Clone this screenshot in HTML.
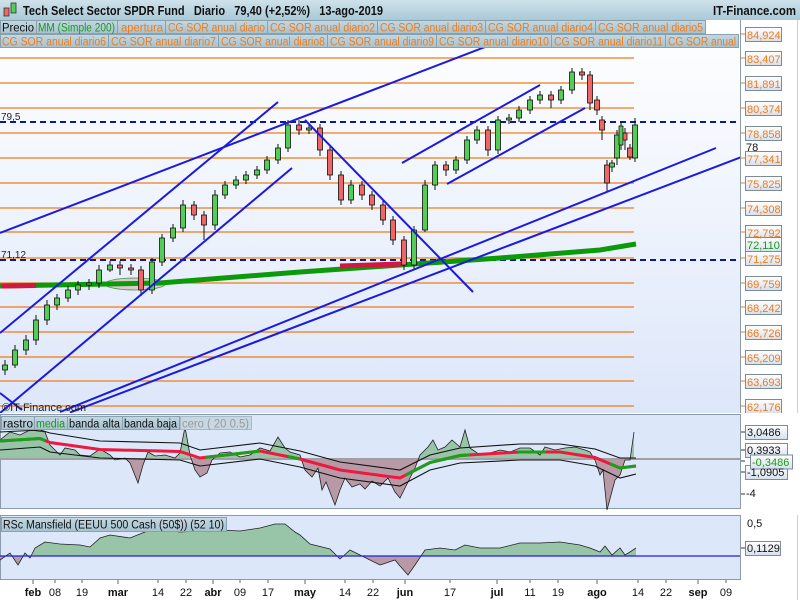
<!DOCTYPE html>
<html><head><meta charset="utf-8"><style>
html,body{margin:0;padding:0;background:#fff}
svg{display:block;font-family:"Liberation Sans",sans-serif}
</style></head><body>
<svg width="800" height="600" viewBox="0 0 800 600" xmlns="http://www.w3.org/2000/svg">
<defs>
<linearGradient id="hdr" x1="0" y1="0" x2="0" y2="1"><stop offset="0" stop-color="#cfe2ea"/><stop offset="1" stop-color="#a9c9d8"/></linearGradient>
<linearGradient id="bg" x1="0" y1="0" x2="0" y2="1"><stop offset="0" stop-color="#ffffff"/><stop offset="1" stop-color="#dde7fa"/></linearGradient>
<linearGradient id="tab" x1="0" y1="0" x2="0" y2="1"><stop offset="0" stop-color="#c3d8e2"/><stop offset="1" stop-color="#a6c2d0"/></linearGradient>
<linearGradient id="lb" x1="0" y1="0" x2="0" y2="1"><stop offset="0" stop-color="#ffffff"/><stop offset="1" stop-color="#d6e0ee"/></linearGradient>
<clipPath id="cm"><rect x="0" y="48" width="740" height="365"/></clipPath>
<clipPath id="up1"><rect x="0" y="414" width="740" height="45"/></clipPath>
<clipPath id="dn1"><rect x="0" y="459" width="740" height="50"/></clipPath>
<clipPath id="up2"><rect x="0" y="515" width="740" height="41"/></clipPath>
<clipPath id="dn2"><rect x="0" y="556" width="740" height="24"/></clipPath>
<clipPath id="gseg"><rect x="0" y="414" width="45" height="95"/><rect x="205" y="414" width="55" height="95"/><rect x="288" y="414" width="12" height="95"/><rect x="405" y="414" width="65" height="95"/><rect x="518" y="414" width="28" height="95"/><rect x="610" y="414" width="30" height="95"/></clipPath>
</defs>
<rect x="0" y="0" width="800" height="20" fill="url(#hdr)"/>
<rect x="4" y="8" width="5" height="8" fill="#e66" stroke="#333" stroke-width="0.8"/>
<rect x="11" y="3" width="5" height="10" fill="#5c5" stroke="#333" stroke-width="0.8"/>
<text x="23" y="15" font-size="13" font-weight="bold" fill="#111" textLength="360" lengthAdjust="spacingAndGlyphs">Tech Select Sector SPDR Fund&#160;&#160; Diario&#160;&#160; 79,40 (+2,52%)&#160;&#160; 13-ago-2019</text>
<text x="713" y="15" font-size="13" font-weight="bold" fill="#111" textLength="83" lengthAdjust="spacingAndGlyphs">IT-Finance.com</text>
<rect x="0" y="20" width="740" height="393" fill="url(#bg)"/>
<rect x="740" y="20" width="60" height="393" fill="#fff"/>
<line x1="740.5" y1="20" x2="740.5" y2="413" stroke="#8a9aa8"/>
<line x1="797.5" y1="20" x2="797.5" y2="600" stroke="#c8d0d8"/>
<g font-size="11.5">
<rect x="0.5" y="20.5" width="705" height="13" fill="url(#tab)" stroke="#8aa0ac"/>
<rect x="0.5" y="34.5" width="738" height="13" fill="url(#tab)" stroke="#8aa0ac"/>
<g stroke="#8aa0ac"><line x1="36.5" y1="20" x2="36.5" y2="34"/><line x1="117.5" y1="20" x2="117.5" y2="34"/><line x1="165.5" y1="20" x2="165.5" y2="34"/><line x1="267.5" y1="20" x2="267.5" y2="34"/><line x1="377.5" y1="20" x2="377.5" y2="34"/><line x1="485.5" y1="20" x2="485.5" y2="34"/><line x1="595.5" y1="20" x2="595.5" y2="34"/>
<line x1="108.5" y1="34" x2="108.5" y2="48"/><line x1="218.5" y1="34" x2="218.5" y2="48"/><line x1="327.5" y1="34" x2="327.5" y2="48"/><line x1="436.5" y1="34" x2="436.5" y2="48"/><line x1="551.5" y1="34" x2="551.5" y2="48"/><line x1="665.5" y1="34" x2="665.5" y2="48"/></g>
<text x="2" y="31.5" fill="#111" textLength="32" lengthAdjust="spacingAndGlyphs">Precio</text>
<text x="38" y="31.5" fill="#1a9a1a" textLength="77" lengthAdjust="spacingAndGlyphs">MM (Simple 200)</text>
<g fill="#f07c18">
<text x="121" y="31.5" textLength="42" lengthAdjust="spacingAndGlyphs">apertura</text>
<text x="168" y="31.5" textLength="97" lengthAdjust="spacingAndGlyphs">CG SOR anual diario</text>
<text x="270" y="31.5" textLength="105" lengthAdjust="spacingAndGlyphs">CG SOR anual diario2</text>
<text x="380" y="31.5" textLength="103" lengthAdjust="spacingAndGlyphs">CG SOR anual diario3</text>
<text x="488" y="31.5" textLength="105" lengthAdjust="spacingAndGlyphs">CG SOR anual diario4</text>
<text x="598" y="31.5" textLength="105" lengthAdjust="spacingAndGlyphs">CG SOR anual diario5</text>
<text x="2" y="45.5" textLength="104" lengthAdjust="spacingAndGlyphs">CG SOR anual diario6</text>
<text x="111" y="45.5" textLength="105" lengthAdjust="spacingAndGlyphs">CG SOR anual diario7</text>
<text x="221" y="45.5" textLength="104" lengthAdjust="spacingAndGlyphs">CG SOR anual diario8</text>
<text x="330" y="45.5" textLength="104" lengthAdjust="spacingAndGlyphs">CG SOR anual diario9</text>
<text x="439" y="45.5" textLength="110" lengthAdjust="spacingAndGlyphs">CG SOR anual diario10</text>
<text x="554" y="45.5" textLength="109" lengthAdjust="spacingAndGlyphs">CG SOR anual diario11</text>
<text x="668" y="45.5" textLength="68" lengthAdjust="spacingAndGlyphs">CG SOR anual</text>
</g></g>
<g clip-path="url(#cm)">
<g stroke="#f07c18" stroke-width="1.2">
<line x1="0" y1="58" x2="634" y2="58"/><line x1="0" y1="83" x2="634" y2="83"/><line x1="0" y1="108" x2="634" y2="108"/><line x1="0" y1="133" x2="634" y2="133"/><line x1="0" y1="158" x2="634" y2="158"/><line x1="0" y1="183" x2="634" y2="183"/><line x1="0" y1="208" x2="634" y2="208"/><line x1="0" y1="232" x2="634" y2="232"/><line x1="0" y1="258" x2="634" y2="258"/><line x1="0" y1="283" x2="634" y2="283"/><line x1="0" y1="307" x2="634" y2="307"/><line x1="0" y1="332" x2="634" y2="332"/><line x1="0" y1="357" x2="634" y2="357"/><line x1="0" y1="381" x2="634" y2="381"/><line x1="0" y1="406" x2="634" y2="406"/>
</g>
<g stroke="#0a1a9a" stroke-width="2" stroke-dasharray="6,4"><line x1="0" y1="122" x2="740" y2="122"/><line x1="0" y1="260" x2="740" y2="260"/></g>
<text x="1" y="120" font-size="10" fill="#222">79,5</text>
<text x="1" y="258" font-size="10" fill="#222">71,12</text>
<ellipse cx="135" cy="284" rx="30" ry="6" fill="#e0c8d0" stroke="#3a9a3a" stroke-width="0.8"/>
<path d="M0 286 L160 283 L300 272 L400 265 L500 258 L600 250 L636 244" fill="none" stroke="#0a9a0a" stroke-width="5"/>
<path d="M2 286 L36 285.5" stroke="#d01840" stroke-width="5"/>
<path d="M340 266 L402 264" stroke="#d01840" stroke-width="5"/>
<path stroke="#111" stroke-width="1" d="M5 360V375M15 345V368M26 335V355M36 315V345M47 300V325M57 294V310M68 286V302M78 281V295M89 279V290M99 265V288M110 261V272M120 261V275M131 264V275M141 266V296M152 258V294M162 234V266M173 224V242M183 200V232M194 201V220M204 211V240M215 190V230M225 181V199M236 176V189M246 171V184M257 166V179M267 156V174M278 144V164M288 120V152M299 120V135M309 124V134M320 124V156M330 146V180M341 171V205M351 180V204M362 181V200M372 191V210M383 201V225M393 216V245M404 236V270M414 226V270M425 180V232M435 161V190M446 161V176M456 156V174M467 136V164M477 126V144M488 126V156M498 116V154M509 114V124M519 106V122M530 96V114M540 91V104M551 91V108M561 86V104M572 68V94M582 68V80M590 71V110M597 96V115M602 116V140M607 160V192M612 160V172M617 130V165M621 122V150M625 128V150M630 144V160M635 118V162"/>
<g stroke="#111" stroke-width="0.8">
<g fill="#5c5">
<rect x="2.5" y="365" width="5" height="5"/><rect x="12.5" y="350" width="5" height="15"/><rect x="23.5" y="340" width="5" height="10"/><rect x="33.5" y="320" width="5" height="20"/><rect x="44.5" y="305" width="5" height="15"/><rect x="54.5" y="298" width="5" height="7"/><rect x="65.5" y="290" width="5" height="8"/><rect x="75.5" y="285" width="5" height="5"/><rect x="86.5" y="283" width="5" height="2"/><rect x="96.5" y="270" width="5" height="13"/><rect x="107.5" y="265" width="5" height="5"/>
<rect x="149.5" y="262" width="5" height="28"/><rect x="159.5" y="238" width="5" height="24"/><rect x="170.5" y="228" width="5" height="10"/><rect x="180.5" y="205" width="5" height="23"/>
<rect x="212.5" y="195" width="5" height="30"/><rect x="222.5" y="185" width="5" height="10"/><rect x="233.5" y="180" width="5" height="5"/><rect x="243.5" y="175" width="5" height="5"/><rect x="254.5" y="170" width="5" height="5"/><rect x="264.5" y="160" width="5" height="10"/><rect x="275.5" y="148" width="5" height="12"/><rect x="285.5" y="125" width="5" height="23"/><rect x="306.5" y="128" width="5" height="2"/>
<rect x="348.5" y="185" width="5" height="15"/>
<rect x="411.5" y="230" width="5" height="35"/><rect x="422.5" y="185" width="5" height="45"/><rect x="432.5" y="165" width="5" height="20"/><rect x="453.5" y="160" width="5" height="10"/><rect x="464.5" y="140" width="5" height="20"/><rect x="474.5" y="130" width="5" height="10"/><rect x="495.5" y="120" width="5" height="30"/><rect x="506.5" y="118" width="5" height="2"/><rect x="516.5" y="110" width="5" height="8"/><rect x="527.5" y="100" width="5" height="10"/><rect x="537.5" y="95" width="5" height="5"/><rect x="558.5" y="90" width="5" height="10"/><rect x="569.5" y="72" width="5" height="18"/>
<rect x="609.5" y="163" width="5" height="4"/><rect x="614.5" y="135" width="5" height="23"/><rect x="619" y="126" width="4" height="19"/><rect x="632.5" y="125" width="5" height="33"/>
</g>
<g fill="#e66">
<rect x="117.5" y="265" width="5" height="3"/><rect x="128.5" y="268" width="5" height="2"/><rect x="138.5" y="270" width="5" height="20"/>
<rect x="191.5" y="205" width="5" height="10"/><rect x="201.5" y="215" width="5" height="10"/><rect x="296.5" y="125" width="5" height="5"/>
<rect x="317.5" y="128" width="5" height="22"/><rect x="327.5" y="150" width="5" height="25"/><rect x="338.5" y="175" width="5" height="25"/><rect x="359.5" y="185" width="5" height="10"/><rect x="369.5" y="195" width="5" height="10"/><rect x="380.5" y="205" width="5" height="15"/><rect x="390.5" y="220" width="5" height="20"/><rect x="401.5" y="240" width="5" height="25"/>
<rect x="443.5" y="165" width="5" height="5"/><rect x="485.5" y="130" width="5" height="20"/><rect x="548.5" y="95" width="5" height="5"/><rect x="579.5" y="72" width="5" height="3"/>
<rect x="587.5" y="75" width="5" height="28"/><rect x="594.5" y="100" width="5" height="10"/><rect x="599.5" y="120" width="5" height="10"/><rect x="604.5" y="165" width="5" height="18"/><rect x="623" y="133" width="4" height="7"/><rect x="627.5" y="148" width="5" height="9"/>
</g></g>
<g stroke="#1a1ae0" stroke-width="2" fill="none">
<line x1="0" y1="333" x2="278" y2="102"/>
<line x1="0" y1="413" x2="292" y2="168"/>
<line x1="0" y1="233" x2="485" y2="47"/>
<line x1="305" y1="120" x2="473" y2="292"/>
<line x1="402" y1="163" x2="540" y2="85"/>
<line x1="447" y1="184" x2="585" y2="108"/>
<line x1="60" y1="412" x2="716" y2="148"/>
<line x1="70" y1="412.5" x2="760" y2="150"/>
<line x1="0" y1="393" x2="22" y2="410"/>
</g>
</g>
<text x="2" y="411" font-size="11" fill="#222" textLength="84" lengthAdjust="spacingAndGlyphs">©IT-Finance.com</text>
<g font-size="11">
<g fill="#111"><text x="746" y="61">84</text><text x="746" y="151">78</text><text x="746" y="255">72</text></g>
<g stroke="#f07c18"><line x1="741" y1="34" x2="746" y2="34"/><line x1="741" y1="58" x2="746" y2="58"/><line x1="741" y1="83" x2="746" y2="83"/><line x1="741" y1="108" x2="746" y2="108"/><line x1="741" y1="133" x2="746" y2="133"/><line x1="741" y1="158" x2="746" y2="158"/><line x1="741" y1="183" x2="746" y2="183"/><line x1="741" y1="208" x2="746" y2="208"/><line x1="741" y1="232" x2="746" y2="232"/><line x1="741" y1="258" x2="746" y2="258"/><line x1="741" y1="283" x2="746" y2="283"/><line x1="741" y1="307" x2="746" y2="307"/><line x1="741" y1="332" x2="746" y2="332"/><line x1="741" y1="357" x2="746" y2="357"/><line x1="741" y1="381" x2="746" y2="381"/><line x1="741" y1="406" x2="746" y2="406"/></g>
<g fill="url(#lb)" stroke="#7a8c98">
<rect x="745.5" y="27.5" width="36" height="14"/><rect x="745.5" y="51.5" width="36" height="14"/><rect x="745.5" y="76.5" width="36" height="14"/><rect x="745.5" y="101.5" width="36" height="14"/><rect x="745.5" y="126.5" width="36" height="14"/><rect x="745.5" y="151.5" width="36" height="14"/><rect x="745.5" y="176.5" width="36" height="14"/><rect x="745.5" y="201.5" width="36" height="14"/><rect x="745.5" y="225.5" width="36" height="14"/><rect x="745.5" y="237.5" width="36" height="14"/><rect x="745.5" y="251.5" width="36" height="14"/><rect x="745.5" y="276.5" width="36" height="14"/><rect x="745.5" y="300.5" width="36" height="14"/><rect x="745.5" y="325.5" width="36" height="14"/><rect x="745.5" y="350.5" width="36" height="14"/><rect x="745.5" y="374.5" width="36" height="14"/><rect x="745.5" y="399.5" width="36" height="14"/>
</g>
<g fill="#f07c18">
<text x="747" y="39">84,924</text><text x="747" y="63">83,407</text><text x="747" y="88">81,891</text><text x="747" y="113">80,374</text><text x="747" y="138">78,858</text><text x="747" y="163">77,341</text><text x="747" y="188">75,825</text><text x="747" y="213">74,308</text><text x="747" y="237">72,792</text><text x="747" y="263">71,275</text><text x="747" y="288">69,759</text><text x="747" y="312">68,242</text><text x="747" y="337">66,726</text><text x="747" y="362">65,209</text><text x="747" y="386">63,693</text><text x="747" y="411">62,176</text>
</g>
<text x="747" y="249" fill="#1a9a1a">72,110</text>
</g>
<rect x="0" y="413" width="800" height="102" fill="#fff"/>
<rect x="0.5" y="414.5" width="740" height="94" fill="#dde7fa" stroke="#8a9aa8"/>
<g clip-path="url(#up1)"><path d="M0 459 L0 440 L10 432 L20 435 L30 430 L45 432 L50 445 L60 455 L65 448 L75 450 L80 455 L90 456 L100 449 L110 455 L115 460 L125 458 L130 463 L138 483 L143 465 L148 452 L155 456 L165 455 L175 458 L180 453 L185 427 L190 455 L195 470 L200 477 L207 473 L212 460 L220 453 L230 452 L240 457 L250 455 L260 448 L270 451 L278 437 L285 448 L290 452 L300 455 L305 470 L312 477 L318 468 L322 490 L326 482 L335 505 L340 490 L345 478 L352 487 L360 484 L365 489 L372 481 L380 486 L388 478 L395 492 L400 498 L408 482 L415 468 L420 455 L428 447 L433 440 L438 450 L445 447 L452 440 L460 447 L465 430 L470 448 L480 455 L490 453 L500 450 L510 452 L520 448 L530 448 L540 455 L545 447 L555 450 L565 448 L575 447 L585 450 L590 452 L595 460 L600 475 L603 470 L607 510 L615 480 L620 475 L625 460 L630 460 L634 432 L634 459 Z" fill="#98c4a8"/></g>
<g clip-path="url(#dn1)"><path d="M0 459 L0 440 L10 432 L20 435 L30 430 L45 432 L50 445 L60 455 L65 448 L75 450 L80 455 L90 456 L100 449 L110 455 L115 460 L125 458 L130 463 L138 483 L143 465 L148 452 L155 456 L165 455 L175 458 L180 453 L185 427 L190 455 L195 470 L200 477 L207 473 L212 460 L220 453 L230 452 L240 457 L250 455 L260 448 L270 451 L278 437 L285 448 L290 452 L300 455 L305 470 L312 477 L318 468 L322 490 L326 482 L335 505 L340 490 L345 478 L352 487 L360 484 L365 489 L372 481 L380 486 L388 478 L395 492 L400 498 L408 482 L415 468 L420 455 L428 447 L433 440 L438 450 L445 447 L452 440 L460 447 L465 430 L470 448 L480 455 L490 453 L500 450 L510 452 L520 448 L530 448 L540 455 L545 447 L555 450 L565 448 L575 447 L585 450 L590 452 L595 460 L600 475 L603 470 L607 510 L615 480 L620 475 L625 460 L630 460 L634 432 L634 459 Z" fill="#b89aa6"/></g>
<line x1="0" y1="459" x2="740" y2="459" stroke="#a0a0a0" stroke-width="2"/>
<path d="M0 440 L10 432 L20 435 L30 430 L45 432 L50 445 L60 455 L65 448 L75 450 L80 455 L90 456 L100 449 L110 455 L115 460 L125 458 L130 463 L138 483 L143 465 L148 452 L155 456 L165 455 L175 458 L180 453 L185 427 L190 455 L195 470 L200 477 L207 473 L212 460 L220 453 L230 452 L240 457 L250 455 L260 448 L270 451 L278 437 L285 448 L290 452 L300 455 L305 470 L312 477 L318 468 L322 490 L326 482 L335 505 L340 490 L345 478 L352 487 L360 484 L365 489 L372 481 L380 486 L388 478 L395 492 L400 498 L408 482 L415 468 L420 455 L428 447 L433 440 L438 450 L445 447 L452 440 L460 447 L465 430 L470 448 L480 455 L490 453 L500 450 L510 452 L520 448 L530 448 L540 455 L545 447 L555 450 L565 448 L575 447 L585 450 L590 452 L595 460 L600 475 L603 470 L607 510 L615 480 L620 475 L625 460 L630 460 L634 432" fill="none" stroke="#222" stroke-width="0.8"/>
<g fill="none" stroke-width="1.1" stroke="#111">
<path d="M0 432 L40 430 L50 433 L100 441 L180 443 L200 450 L260 443 L300 451 L340 462 L400 470 L430 455 L460 448 L520 444 L560 444 L595 449 L620 458 L636 458"/>
<path d="M0 450 L40 447 L50 452 L100 458 L180 460 L200 466 L260 459 L300 467 L340 478 L400 486 L430 470 L460 463 L520 460 L560 460 L595 466 L620 478 L636 474"/>
</g>
<path d="M0 441 L40 438.5 L50 442.5 L100 449.5 L180 451.5 L200 458 L260 451 L300 459 L340 470 L400 478 L430 462.5 L460 455.5 L520 452 L560 452 L595 457.5 L620 468 L636 466" fill="none" stroke="#ee1840" stroke-width="3"/>
<path d="M0 441 L40 438.5 L50 442.5 L100 449.5 L180 451.5 L200 458 L260 451 L300 459 L340 470 L400 478 L430 462.5 L460 455.5 L520 452 L560 452 L595 457.5 L620 468 L636 466" fill="none" stroke="#1aa01a" stroke-width="3" clip-path="url(#gseg)"/>
<g font-size="11.5">
<rect x="1.5" y="416.5" width="178" height="13" fill="url(#tab)" stroke="#8aa0ac"/>
<g stroke="#8aa0ac"><line x1="34.5" y1="416" x2="34.5" y2="430"/><line x1="67.5" y1="416" x2="67.5" y2="430"/><line x1="122.5" y1="416" x2="122.5" y2="430"/><line x1="179.5" y1="416" x2="179.5" y2="430"/></g>
<rect x="180.5" y="416.5" width="71" height="13" fill="#c8d8e2" stroke="#a8b8c4"/>
<text x="3" y="427.5" fill="#111" textLength="30" lengthAdjust="spacingAndGlyphs">rastro</text><text x="36" y="427.5" fill="#1a9a1a" textLength="29" lengthAdjust="spacingAndGlyphs">media</text><text x="69" y="427.5" fill="#111" textLength="51" lengthAdjust="spacingAndGlyphs">banda alta</text><text x="124" y="427.5" fill="#111" textLength="53" lengthAdjust="spacingAndGlyphs">banda baja</text><text x="182" y="427.5" fill="#999" textLength="67" lengthAdjust="spacingAndGlyphs">cero ( 20 0.5)</text>
</g>
<g font-size="11" fill="#111">
<text x="746" y="436">4</text><text x="746" y="497">-4</text>
<g stroke="#333"><line x1="741" y1="432" x2="745" y2="432"/><line x1="741" y1="450" x2="745" y2="450"/><line x1="741" y1="461" x2="745" y2="461"/><line x1="741" y1="472" x2="745" y2="472"/><line x1="741" y1="494" x2="745" y2="494"/></g>
<g fill="url(#lb)" stroke="#7a8c98"><rect x="745.5" y="425.5" width="42" height="14"/><rect x="745.5" y="443.5" width="42" height="14"/><rect x="745.5" y="465.5" width="42" height="14"/><rect x="750.5" y="455" width="42" height="14"/></g>
<text x="747" y="436">3,0486</text><text x="747" y="454">0,3933</text><text x="752" y="466" fill="#1a9a1a">-0,3486</text><text x="747" y="476">-1,0905</text>
</g>
<rect x="0.5" y="515.5" width="740" height="64" fill="#dde7fa" stroke="#8a9aa8"/>
<g clip-path="url(#up2)"><path d="M0 556 L0 560 L10 553 L18 565 L25 553 L30 558 L35 548 L45 542 L60 544 L80 545 L90 547 L100 538 L110 535 L130 538 L150 530 L165 530 L180 532 L200 531 L220 530 L240 531 L260 528 L275 524 L285 524 L295 532 L300 535 L310 544 L330 549 L340 559 L350 550 L360 555 L370 560 L380 565 L395 560 L400 566 L408 575 L415 565 L425 550 L440 548 L455 550 L465 545 L480 548 L500 548 L520 543 L540 543 L560 542 L580 545 L590 548 L600 552 L605 546 L612 555 L620 548 L625 555 L630 552 L636 548 L636 556 Z" fill="#98c4a8"/></g>
<g clip-path="url(#dn2)"><path d="M0 556 L0 560 L10 553 L18 565 L25 553 L30 558 L35 548 L45 542 L60 544 L80 545 L90 547 L100 538 L110 535 L130 538 L150 530 L165 530 L180 532 L200 531 L220 530 L240 531 L260 528 L275 524 L285 524 L295 532 L300 535 L310 544 L330 549 L340 559 L350 550 L360 555 L370 560 L380 565 L395 560 L400 566 L408 575 L415 565 L425 550 L440 548 L455 550 L465 545 L480 548 L500 548 L520 543 L540 543 L560 542 L580 545 L590 548 L600 552 L605 546 L612 555 L620 548 L625 555 L630 552 L636 548 L636 556 Z" fill="#b89aa6"/></g>
<path d="M0 560 L10 553 L18 565 L25 553 L30 558 L35 548 L45 542 L60 544 L80 545 L90 547 L100 538 L110 535 L130 538 L150 530 L165 530 L180 532 L200 531 L220 530 L240 531 L260 528 L275 524 L285 524 L295 532 L300 535 L310 544 L330 549 L340 559 L350 550 L360 555 L370 560 L380 565 L395 560 L400 566 L408 575 L415 565 L425 550 L440 548 L455 550 L465 545 L480 548 L500 548 L520 543 L540 543 L560 542 L580 545 L590 548 L600 552 L605 546 L612 555 L620 548 L625 555 L630 552 L636 548" fill="none" stroke="#222" stroke-width="0.8"/>
<line x1="0" y1="556" x2="740" y2="556" stroke="#2020e0" stroke-width="1.3"/>
<rect x="1.5" y="517.5" width="225" height="14" fill="url(#tab)" stroke="#8aa0ac"/>
<text x="3" y="528.5" font-size="11.5" fill="#111" textLength="221" lengthAdjust="spacingAndGlyphs">RSc Mansfield (EEUU 500 Cash (50$)) (52 10)</text>
<g font-size="11" fill="#111">
<text x="747" y="527">0,5</text>
<line x1="741" y1="548" x2="745" y2="548" stroke="#333"/>
<rect x="745.5" y="541.5" width="35" height="14" fill="url(#lb)" stroke="#7a8c98"/>
<text x="747" y="552">0,1129</text>
</g>
<g stroke="#666"><line x1="33" y1="580" x2="33" y2="584"/><line x1="118" y1="580" x2="118" y2="584"/><line x1="213" y1="580" x2="213" y2="584"/><line x1="305" y1="580" x2="305" y2="584"/><line x1="405" y1="580" x2="405" y2="584"/><line x1="497" y1="580" x2="497" y2="584"/><line x1="597" y1="580" x2="597" y2="584"/><line x1="698" y1="580" x2="698" y2="584"/>
<line x1="55" y1="580" x2="55" y2="583"/><line x1="82" y1="580" x2="82" y2="583"/><line x1="158" y1="580" x2="158" y2="583"/><line x1="186" y1="580" x2="186" y2="583"/><line x1="240" y1="580" x2="240" y2="583"/><line x1="268" y1="580" x2="268" y2="583"/><line x1="345" y1="580" x2="345" y2="583"/><line x1="373" y1="580" x2="373" y2="583"/><line x1="450" y1="580" x2="450" y2="583"/><line x1="530" y1="580" x2="530" y2="583"/><line x1="558" y1="580" x2="558" y2="583"/><line x1="638" y1="580" x2="638" y2="583"/><line x1="666" y1="580" x2="666" y2="583"/><line x1="726" y1="580" x2="726" y2="583"/></g>
<g font-size="11" fill="#111" text-anchor="middle">
<g font-weight="bold"><text x="33" y="596">feb</text><text x="118" y="596">mar</text><text x="213" y="596">abr</text><text x="305" y="596">may</text><text x="405" y="596">jun</text><text x="497" y="596">jul</text><text x="597" y="596">ago</text><text x="698" y="596">sep</text></g>
<text x="55" y="596">08</text><text x="82" y="596">19</text><text x="158" y="596">14</text><text x="186" y="596">22</text><text x="240" y="596">09</text><text x="268" y="596">17</text><text x="345" y="596">14</text><text x="373" y="596">22</text><text x="450" y="596">17</text><text x="530" y="596">11</text><text x="558" y="596">19</text><text x="638" y="596">14</text><text x="666" y="596">22</text><text x="726" y="596">09</text>
</g>
</svg>
</body></html>
